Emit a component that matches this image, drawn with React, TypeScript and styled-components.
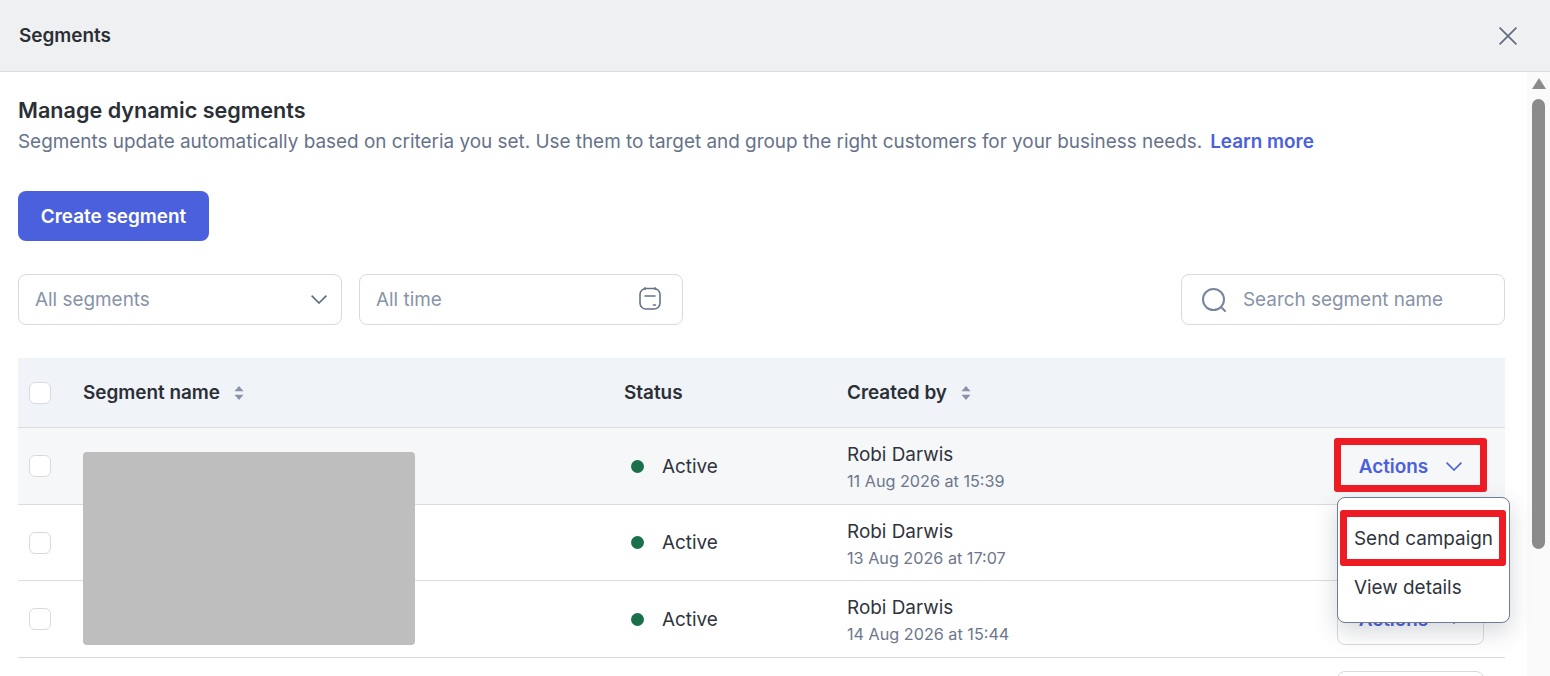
import styled, { createGlobalStyle } from "styled-components";

const GlobalStyle = createGlobalStyle`
  html, body {
    margin: 0;
    padding: 0;
    height: 100%;
    overflow: hidden;
    background: #fff;
  }
  * {
    box-sizing: border-box;
  }
`;

const Page = styled.div`
  width: 100vw;
  height: 100vh;
  display: flex;
  flex-direction: column;
  overflow: hidden;
  font-family: Inter, "Noto Sans", sans-serif;
  color: #2b2f36;
`;

const TopBar = styled.header`
  height: 72px;
  flex: none;
  display: flex;
  align-items: center;
  justify-content: space-between;
  padding: 0 33px 0 19px;
  background: #eff0f2;
  border-bottom: 1px solid #d9dbde;
`;

const TopTitle = styled.h1`
  margin: 0;
  font-size: 18.9px;
  font-weight: 600;
  color: #2b2f36;
`;

const CloseButton = styled.span`
  display: flex;
  color: #5f6b7d;
`;

const Body = styled.div`
  flex: 1;
  min-height: 0;
  display: flex;
`;

const Content = styled.main`
  position: relative;
  flex: 1;
  min-width: 0;
  padding: 26px 22px 0 18px;
`;

const Heading = styled.h2`
  margin: 0;
  font-size: 21.6px;
  line-height: 24px;
  font-weight: 600;
  color: #2b2f36;
`;

const Description = styled.p`
  margin: 7px 0 0;
  font-size: 18.9px;
  line-height: 26px;
  color: #66728a;
  white-space: nowrap;
`;

const LearnMore = styled.a`
  margin-left: 8px;
  font-weight: 600;
  color: #4a60dc;
`;

const PrimaryButton = styled.button`
  display: block;
  width: 191px;
  height: 50px;
  margin-top: 36px;
  border: 0;
  border-radius: 8px;
  background: #4b60dc;
  color: #fff;
  font: 600 18.9px Inter, sans-serif;
`;

const FilterBar = styled.div`
  display: flex;
  gap: 17px;
  margin-top: 33px;
`;

const Field = styled.div`
  width: 324px;
  height: 51px;
  display: flex;
  align-items: center;
  justify-content: space-between;
  padding: 0 14px 0 16px;
  border: 1px solid #d8dade;
  border-radius: 8px;
  background: #fff;
  font-size: 18.9px;
  color: #8793a8;
`;

const DateField = styled(Field)`
  padding-right: 20px;
`;

const SearchField = styled(Field)`
  margin-left: auto;
  justify-content: flex-start;
  gap: 16px;
  padding-left: 19px;
`;

const Table = styled.div`
  margin-top: 33px;
`;

const Row = styled.div<{ $height: number; $bg?: string }>`
  height: ${(p) => p.$height}px;
  display: grid;
  grid-template-columns: 54px 541px 223px 1fr;
  align-items: center;
  padding-left: 11px;
  background: ${(p) => p.$bg ?? "#fff"};
  border-bottom: 1px solid #d9dce1;
`;

const Checkbox = styled.span`
  display: block;
  width: 22px;
  height: 22px;
  border: 1px solid #d8dade;
  border-radius: 6px;
  background: #fff;
`;

const HeadCell = styled.div`
  display: flex;
  align-items: center;
  gap: 14px;
  font-size: 18.9px;
  font-weight: 600;
  color: #2b2f36;
`;

const Status = styled.div`
  display: flex;
  align-items: center;
  gap: 18px;
  padding-left: 7px;
  font-size: 18.9px;
  color: #2f343c;
`;

const Dot = styled.span`
  width: 13px;
  height: 13px;
  border-radius: 50%;
  background: #1b704c;
`;

const CreatorCell = styled.div`
  display: grid;
  grid-template-columns: 1fr auto;
  align-items: center;
`;

const Creator = styled.div`
  display: flex;
  flex-direction: column;
  gap: 5px;
  margin-top: 3px;
`;

const CreatorName = styled.span`
  font-size: 18.9px;
  line-height: 22px;
  color: #2f343c;
`;

const CreatedAt = styled.span`
  font-size: 16.2px;
  line-height: 20px;
  color: #6c778c;
`;

const ActionCell = styled.div`
  display: flex;
  justify-content: flex-end;
  padding-right: 21px;
`;

const ActionsButton = styled.button<{ $open?: boolean }>`
  width: 147px;
  height: 51px;
  display: flex;
  align-items: center;
  justify-content: center;
  gap: 18px;
  border: 1px solid ${(p) => (p.$open ? "transparent" : "#d8dade")};
  border-radius: 8px;
  background: ${(p) => (p.$open ? "transparent" : "#fff")};
  color: #4a60dc;
  font: 600 18.9px Inter, sans-serif;
`;

const Redaction = styled.div`
  position: absolute;
  left: 83px;
  top: 380px;
  width: 332px;
  height: 193px;
  border-radius: 4px;
  background: #bebebe;
`;

const Marker = styled.div`
  position: absolute;
  border: 7px solid #ed1c24;
  border-radius: 3px;
  pointer-events: none;
`;

const ActionsMarker = styled(Marker)`
  left: 1334px;
  top: 366px;
  width: 153px;
  height: 54px;
`;

const SendMarker = styled(Marker)`
  left: 1340px;
  top: 438px;
  width: 166px;
  height: 56px;
`;

const Menu = styled.div`
  position: absolute;
  left: 1337px;
  top: 425px;
  width: 173px;
  height: 126px;
  padding-top: 23px;
  border: 1px solid #707c92;
  border-radius: 8px;
  background: #fff;
  box-shadow: 0 8px 24px rgba(40, 50, 70, 0.2);
`;

const MenuItem = styled.div`
  height: 49px;
  padding: 6px 0 0 16px;
  font-size: 18.9px;
  line-height: 24px;
  color: #2f343c;
  white-space: nowrap;
`;

const ScrollTrack = styled.aside`
  width: 23px;
  flex: none;
  display: flex;
  flex-direction: column;
  align-items: flex-start;
  padding-left: 5px;
  background: #fafafa;
`;

const ScrollArrow = styled.span`
  width: 0;
  height: 0;
  margin-top: 6px;
  border-left: 7px solid transparent;
  border-right: 7px solid transparent;
  border-bottom: 11px solid #8b8b8b;
`;

const ScrollThumb = styled.span`
  width: 13px;
  height: 450px;
  margin-top: 10px;
  border-radius: 7px;
  background: #8b8b8b;
`;

const CloseIcon = () => (
  <svg width="18" height="18" viewBox="0 0 18 18" fill="none" stroke="currentColor" strokeWidth="1.7">
    <path d="M.6.6l16.8 16.8M17.4.6.6 17.4" />
  </svg>
);

const ChevronIcon = ({ color }: { color: string }) => (
  <svg width="16" height="9" viewBox="0 0 16 9" fill="none" stroke={color} strokeWidth="1.6">
    <path d="M.6.6 8 8l7.4-7.4" />
  </svg>
);

const SortIcon = () => (
  <svg width="10" height="16" viewBox="0 0 10 16" fill="#8793a8">
    <path d="M5 .9 9.5 6.3H.5Z" />
    <path d="M5 15 .5 9.7H9.5Z" />
  </svg>
);

const CalendarIcon = () => (
  <svg width="24" height="26" viewBox="0 0 24 26" fill="none" stroke="#66728a" strokeWidth="1.6" strokeLinecap="round">
    <rect x="2" y="1.5" width="20" height="20.5" rx="6" />
    <path d="M7 .8v1.5M17 .8v1.5M7 9h10M15.5 18h2" />
  </svg>
);

const SearchIcon = () => (
  <svg width="26" height="26" viewBox="0 0 26 26" fill="none" stroke="#76849c" strokeWidth="2" strokeLinecap="round">
    <circle cx="12.5" cy="12.5" r="10.5" />
    <path d="M21 21l3 3" />
  </svg>
);

const rows = [
  { date: "11 Aug 2026 at 15:39", bg: "#f6f7f9", height: 77 },
  { date: "13 Aug 2026 at 17:07", height: 76 },
  { date: "14 Aug 2026 at 15:44", height: 77 },
];

export const App = () => {
  return (
    <Page>
      <GlobalStyle />
      <TopBar>
        <TopTitle>Segments</TopTitle>
        <CloseButton>
          <CloseIcon />
        </CloseButton>
      </TopBar>
      <Body>
        <Content>
          <Heading>Manage dynamic segments</Heading>
          <Description>
            Segments update automatically based on criteria you set. Use them to target and group the right customers for your business needs.
            <LearnMore>Learn more</LearnMore>
          </Description>
          <PrimaryButton>Create segment</PrimaryButton>
          <FilterBar>
            <Field>
              All segments
              <ChevronIcon color="#5f6b7d" />
            </Field>
            <DateField>
              All time
              <CalendarIcon />
            </DateField>
            <SearchField>
              <SearchIcon />
              Search segment name
            </SearchField>
          </FilterBar>
          <Table>
            <Row $height={70} $bg="#f0f3f8">
              <Checkbox />
              <HeadCell>
                Segment name <SortIcon />
              </HeadCell>
              <HeadCell>Status</HeadCell>
              <HeadCell>
                Created by <SortIcon />
              </HeadCell>
            </Row>
            {rows.map((row, i) => (
              <Row key={row.date} $height={row.height} $bg={row.bg}>
                <Checkbox />
                <div />
                <Status>
                  <Dot />
                  Active
                </Status>
                <CreatorCell>
                  <Creator>
                    <CreatorName>Robi Darwis</CreatorName>
                    <CreatedAt>{row.date}</CreatedAt>
                  </Creator>
                  <ActionCell>
                    <ActionsButton $open={i === 0}>
                      Actions
                      <ChevronIcon color="#4a60dc" />
                    </ActionsButton>
                  </ActionCell>
                </CreatorCell>
              </Row>
            ))}
            <Row $height={77}>
              <div />
              <div />
              <div />
              <ActionCell>
                <ActionsButton />
              </ActionCell>
            </Row>
          </Table>
          <Redaction />
          <Menu>
            <MenuItem>Send campaign</MenuItem>
            <MenuItem>View details</MenuItem>
          </Menu>
          <ActionsMarker />
          <SendMarker />
        </Content>
        <ScrollTrack>
          <ScrollArrow />
          <ScrollThumb />
        </ScrollTrack>
      </Body>
    </Page>
  );
};

export default App;
